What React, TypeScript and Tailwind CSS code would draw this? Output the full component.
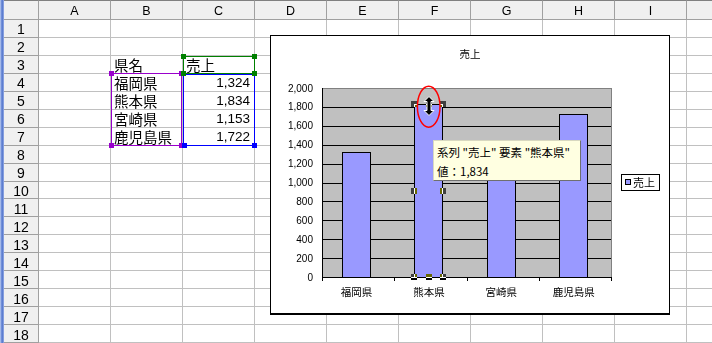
import React from "react";

const cols = ["A", "B", "C", "D", "E", "F", "G", "H", "I", ""];

const cells: Record<string, string> = {
  "3B": "県名",
  "3C": "売上",
  "4B": "福岡県",
  "4C": "1,324",
  "5B": "熊本県",
  "5C": "1,834",
  "6B": "宮崎県",
  "6C": "1,153",
  "7B": "鹿児島県",
  "7C": "1,722",
};

const data = [
  { name: "福岡県", value: 1324 },
  { name: "熊本県", value: 1834 },
  { name: "宮崎県", value: 1153 },
  { name: "鹿児島県", value: 1722 },
];

// plot area in chart coords
const PX0 = 52;
const PX1 = 341;
const PY0 = 53;
const PY1 = 242;
const yOf = (v: number) => PY1 - (v / 2000) * (PY1 - PY0);
const px = (v: number) => Math.round(v) + 0.5;

const Handle = ({ x, y, color }: { x: number; y: number; color: string }) => (
  <div
    className={`absolute w-[5px] h-[5px] ${color}`}
    style={{ left: x - 2, top: y - 2 }}
  />
);

const Chart = () => {
  const bar2 = data[1];
  const b2top = Math.round(yOf(bar2.value));
  const b2mid = Math.round((b2top + PY1) / 2);
  const handles = [
    [144, b2top],
    [158.5, b2top],
    [173, b2top],
    [144, b2mid],
    [173, b2mid],
    [144, PY1],
    [158.5, PY1],
    [173, PY1],
  ];

  return (
    <div className="absolute left-[270px] top-[35px] w-[400px] h-[280px] bg-white border border-black border-b-2">
      <svg
        className="absolute left-[-1px] top-[-1px]"
        width={400}
        height={280}
        shapeRendering="crispEdges"
        style={{ overflow: "visible" }}
      >
        <text
          x={200}
          y={23}
          textAnchor="middle"
          fontSize={10.5}
          fontFamily="'Noto Sans CJK JP', sans-serif"
        >
          売上
        </text>

        {/* plot area */}
        <rect x={PX0} y={PY0} width={PX1 - PX0} height={PY1 - PY0} fill="#c0c0c0" />
        <line x1={PX0} y1={PY0 + 0.5} x2={PX1} y2={PY0 + 0.5} stroke="#808080" />
        <line x1={PX1 + 0.5} y1={PY0} x2={PX1 + 0.5} y2={PY1} stroke="#808080" />
        {Array.from({ length: 9 }, (_, i) => (
          <line
            key={i}
            x1={PX0}
            x2={PX1}
            y1={px(yOf((i + 1) * 200))}
            y2={px(yOf((i + 1) * 200))}
            stroke="#000"
          />
        ))}

        {/* y labels */}
        {Array.from({ length: 11 }, (_, i) => (
          <text
            key={i}
            x={43}
            y={yOf(i * 200) + 3.5}
            textAnchor="end"
            fontSize={10}
            fontFamily="'Liberation Sans', sans-serif"
          >
            {(i * 200).toLocaleString("en-US")}
          </text>
        ))}

        {/* bars */}
        {data.map((d, i) => {
          const x = 72.5 + Math.round(i * 72.4);
          const y = px(yOf(d.value));
          return (
            <rect
              key={d.name}
              x={x}
              y={y}
              width={28}
              height={PY1 - y}
              fill="#9999ff"
              stroke="#000"
            />
          );
        })}

        {/* axes */}
        <line x1={PX0 + 0.5} y1={PY0} x2={PX0 + 0.5} y2={PY1 + 1} stroke="#000" />
        <line x1={PX0} y1={PY1 + 0.5} x2={PX1 + 1} y2={PY1 + 0.5} stroke="#000" />
        {Array.from({ length: 5 }, (_, k) => {
          const x = px(PX0 + k * 72.3);
          return <line key={k} x1={x} x2={x} y1={PY1} y2={PY1 + 4} stroke="#000" />;
        })}

        {/* x labels */}
        {data.map((d, i) => (
          <text
            key={d.name}
            x={86.5 + i * 72.4}
            y={261}
            textAnchor="middle"
            fontSize={10.5}
            fontFamily="'Noto Sans CJK JP', sans-serif"
          >
            {d.name}
          </text>
        ))}

        {/* legend */}
        <rect x={351.5} y={139.5} width={38} height={16} fill="#fff" stroke="#000" />
        <rect x={355.5} y={144.5} width={5} height={5} fill="#9999ff" stroke="#000" />
        <text
          x={363}
          y={151.5}
          fontSize={11}
          fontFamily="'Noto Sans CJK JP', sans-serif"
        >
          売上
        </text>

        {/* selection handles (inverted) */}
        {handles.map(([hx, hy], i) => (
          <rect
            key={i}
            x={Math.round(hx - 3)}
            y={hy - 3}
            width={6}
            height={6}
            fill="#fff"
            className="mix-blend-difference"
          />
        ))}

        {/* red ellipse */}
        <ellipse
          cx={158.7}
          cy={71.7}
          rx={11.3}
          ry={20.5}
          fill="none"
          stroke="#ff0000"
          strokeWidth={1.5}
          shapeRendering="auto"
        />

        {/* resize cursor */}
        <path
          d="M159 61.5 L164 66.5 L161 66.5 L161 75.5 L164 75.5 L159 80.5 L154 75.5 L157 75.5 L157 66.5 L154 66.5 Z"
          fill="#000"
          stroke="#fff"
          strokeWidth={1}
          shapeRendering="auto"
        />
      </svg>

      {/* tooltip */}
      <div
        className="absolute left-[162px] top-[104px] w-[148px] h-[41px] bg-[#ffffe1] border border-[#d8d8c0] border-r-[#6f6f6f] border-b-[#6f6f6f] pl-[3px] pt-[2px] text-[11.5px] leading-[19px] text-black whitespace-nowrap"
        style={{ fontFamily: "'Noto Sans CJK JP', sans-serif" }}
      >
        <div>系列 "売上" 要素 "熊本県"</div>
        <div>値：1,834</div>
      </div>
    </div>
  );
};

export default function App() {
  return (
    <div
      className="relative w-[712px] h-[343px] overflow-hidden bg-white flex text-black"
      style={{ fontFamily: "'Liberation Sans', 'Noto Sans CJK JP', sans-serif" }}
    >
      <div className="w-[4px] shrink-0 h-full bg-[linear-gradient(to_right,#c4d2f2,#7391da,#5a7bcf,#9fb3e6)]" />
      <div className="flex flex-col">
        {/* column header */}
        <div className="flex h-[20px]">
          <div className="w-[35px] shrink-0 bg-[#f0f0f0] border-t border-r border-b border-t-[#808080] border-[#a0a0a0]" />
          {cols.map((c, i) => (
            <div
              key={i}
              className="w-[72px] shrink-0 bg-[#f0f0f0] border-t border-r border-b border-t-[#808080] border-[#a0a0a0] flex items-center justify-center pt-[2px] text-[12.5px] leading-none"
            >
              {c}
            </div>
          ))}
        </div>

        {Array.from({ length: 18 }, (_, r) => {
          const n = r + 1;
          return (
            <div key={n} className="flex h-[18px]">
              <div className="w-[35px] shrink-0 bg-[#f0f0f0] border-r border-b border-[#a0a0a0] flex items-center justify-center pt-[2px] text-[14px] leading-none">
                {n}
              </div>
              {cols.map((c, i) => {
                const v = cells[`${n}${c}`];
                const isNum = c === "C" && n > 3;
                return (
                  <div
                    key={i}
                    className={`w-[72px] shrink-0 border-r border-b border-[#c0c0c0] flex items-end whitespace-nowrap leading-none ${
                      isNum ? "justify-end pr-[4px] text-[13.5px] pb-[1px]" : "pl-[3px] text-[14.5px]"
                    }`}
                    style={isNum ? undefined : { fontFamily: "'Noto Sans CJK JP', sans-serif" }}
                  >
                    {v}
                  </div>
                );
              })}
            </div>
          );
        })}
      </div>

      {/* range selections */}
      <div className="absolute left-[111px] top-[73px] w-[71px] h-[73px] border border-[#9900cc]" />
      <div className="absolute left-[183px] top-[74px] w-[72px] h-[72px] border border-[#0000ff]" />
      <div className="absolute left-[183px] top-[56px] w-[72px] h-[18px] border border-[#008000]" />
      <Handle x={111} y={73} color="bg-[#9900cc]" />
      <Handle x={181} y={73} color="bg-[#9900cc]" />
      <Handle x={111} y={145} color="bg-[#9900cc]" />
      <Handle x={181} y={145} color="bg-[#9900cc]" />
      <Handle x={184} y={145} color="bg-[#0000ff]" />
      <Handle x={254} y={145} color="bg-[#0000ff]" />
      <Handle x={183} y={56} color="bg-[#008000]" />
      <Handle x={254} y={56} color="bg-[#008000]" />
      <Handle x={183} y={73} color="bg-[#008000]" />
      <Handle x={254} y={73} color="bg-[#008000]" />

      <Chart />
    </div>
  );
}
